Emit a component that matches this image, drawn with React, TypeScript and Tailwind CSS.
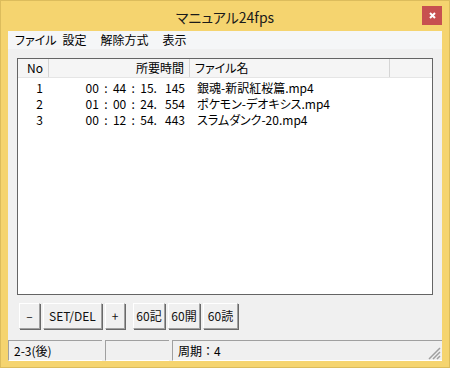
import React from "react";

const FONT = { fontFamily: '"Noto Sans CJK JP", "Noto Sans", sans-serif' };

const rows = [
  { no: "1", time: "00  :  44  :  15.   145", name: "銀魂-新訳紅桜篇.mp4" },
  { no: "2", time: "01  :  00  :  24.   554", name: "ポケモン-デオキシス.mp4" },
  { no: "3", time: "00  :  12  :  54.   443", name: "スラムダンク-20.mp4" },
];

function Btn({ label, w }: { label: string; w: string }) {
  return (
    <button
      className={`${w} h-[26px] shrink-0 border border-t-white border-l-white border-r-[#a0a0a0] border-b-[#a0a0a0] bg-[#f0f0f0] text-[12px] leading-none text-[#111] shadow-[1px_1px_0_#696969]`}
    >
      {label}
    </button>
  );
}

export default function App() {
  return (
    <div
      className="w-[450px] h-[368px] bg-[#f5d46f] border border-[#dcbc5c] flex flex-col text-black [font-feature-settings:'palt']"
      style={FONT}
    >
      {/* title bar */}
      <div className="h-[30px] flex items-center relative shrink-0">
        <div className="flex-1 text-center text-[14px] leading-none pt-[1px] text-[#1a1a1a]">マニュアル24fps</div>
        <div className="absolute right-[7px] top-[5px] w-[20px] h-[19px] bg-[#c75050] flex items-center justify-center">
          <svg width="7" height="7" viewBox="0 0 7 7">
            <path d="M1 1 L6 6 M6 1 L1 6" stroke="white" strokeWidth="2" />
          </svg>
        </div>
      </div>

      {/* client */}
      <div className="mx-[7px] flex-1 flex flex-col bg-[#f0f0f0] mb-[6px]">
        {/* menu */}
        <div className="h-[18px] bg-[#f5f6f7] flex items-center text-[12px] leading-none pl-[7px]">
          <span>ファイル</span>
          <span className="ml-[6px]">設定</span>
          <span className="ml-[14px]">解除方式</span>
          <span className="ml-[14px]">表示</span>
        </div>

        {/* list view */}
        <div className="mt-[9px] ml-[9px] w-[416px] h-[237px] border border-[#646464] bg-white flex flex-col text-[12px] leading-none">
          <div className="h-[19px] flex bg-[#f5f5f5] border-b border-[#e5e5e5]">
            <div className="w-[31px] border-r border-[#d5d5d5] flex items-center pl-[9px]">No</div>
            <div className="w-[141px] border-r border-[#d5d5d5] flex items-center justify-end pr-[5px]">所要時間</div>
            <div className="w-[200px] border-r border-[#d5d5d5] flex items-center pl-[5px]">ファイル名</div>
            <div className="flex-1" />
          </div>
          <div className="pt-[2px]">
            {rows.map((r) => (
              <div key={r.no} className="h-[16px] flex items-center">
                <div className="w-[25px] text-right">{r.no}</div>
                <div className="w-[142px] text-right whitespace-pre">{r.time}</div>
                <div className="pl-[12px]">{r.name}</div>
              </div>
            ))}
          </div>
        </div>

        {/* buttons */}
        <div className="mt-[8px] ml-[11px] flex gap-[3px]">
          <Btn label="–" w="w-[21px]" />
          <Btn label="SET/DEL" w="w-[59px]" />
          <Btn label="+" w="w-[20px]" />
          <div className="w-[2px]" />
          <Btn label="60記" w="w-[32px]" />
          <Btn label="60開" w="w-[32px]" />
          <Btn label="60読" w="w-[35px]" />
        </div>

        {/* status bar */}
        <div className="mt-auto h-[21px] flex gap-[3px] text-[12px] leading-none relative">
          <div className="w-[94px] border-t border-l border-[#a0a0a0] border-b border-b-white flex items-center pl-[5px]">2-3(後)</div>
          <div className="w-[64px] border-t border-l border-[#a0a0a0] border-b border-b-white" />
          <div className="flex-1 border-t border-l border-[#a0a0a0] border-b border-b-white flex items-center pl-[5px] [font-feature-settings:normal]">周期：4</div>
          <svg className="absolute right-[1px] bottom-[1px]" width="14" height="14" viewBox="0 0 14 14">
            <path d="M13 2 L2 13 M13 6 L6 13 M13 10 L10 13" stroke="#a0a0a0" strokeWidth="1.5" />
          </svg>
        </div>
      </div>
    </div>
  );
}
